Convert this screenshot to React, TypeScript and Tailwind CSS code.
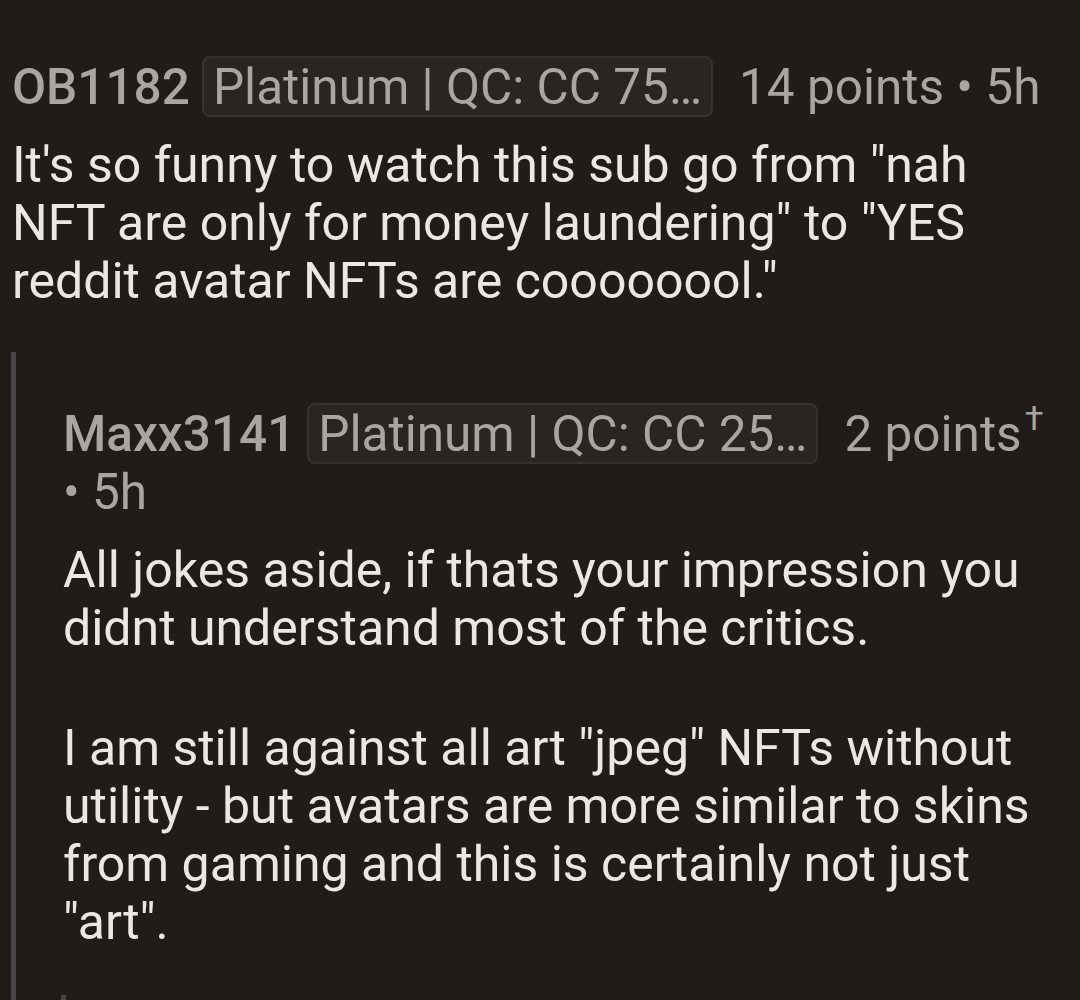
import React from "react";

function Badge({ text }: { text: string }) {
  return (
    <span className="inline-flex h-[61px] items-center rounded-[8px] border-2 border-[#363230] bg-[#292523] px-[9px] text-[#aaa4a3]">
      {text}
    </span>
  );
}

export default function App() {
  return (
    <div
      className="h-[1000px] w-[1080px] overflow-hidden bg-[#201c19]"
      style={{ fontFamily: "Roboto, 'Noto Sans', sans-serif" }}
    >
      <div className="pt-[56px]">
        <div className="px-[12px]">
          <div className="flex flex-wrap items-center gap-x-[12px] text-[49.5px] leading-[56px] text-[#aaa4a3]">
            <span className="font-medium">OB1182</span>
            <Badge text="Platinum | QC: CC 75…" />
            <span className="ml-[14px]">14 points • 5h</span>
          </div>
          <p className="mt-[19px] text-[50px] leading-[58px] text-[#ebe7e4]">
            It's so funny to watch this sub go from "nah
            <br />
            NFT are only for money laundering" to "YES
            <br />
            reddit avatar NFTs are coooooool."
          </p>
        </div>

        <div className="ml-[11px] mt-[42px] border-l-[5px] border-[#4a4645] pl-[47px] pt-[51px]">
          <div className="flex flex-wrap items-center gap-x-[12px] text-[49.5px] leading-[56px] text-[#aaa4a3]">
            <span className="font-medium">Maxx3141</span>
            <Badge text="Platinum | QC: CC 25…" />
            <span className="ml-[14px]">
              2 points<sup className="ml-[3px] top-[-0.6em] text-[34px]">†</sup>
            </span>
            <span>• 5h</span>
          </div>
          <p className="mt-[21px] text-[50px] leading-[58px] text-[#ebe7e4]">
            All jokes aside, if thats your impression you
            <br />
            didnt understand most of the critics.
          </p>
          <p className="mt-[62px] text-[50px] leading-[58px] text-[#ebe7e4]">
            I am still against all art "jpeg" NFTs without
            <br />
            utility - but avatars are more similar to skins
            <br />
            from gaming and this is certainly not just
            <br />
            "art".
          </p>
          <div className="ml-[-2px] mt-[44px] h-[40px] w-[5px] bg-[#4a4645]" />
        </div>
      </div>
    </div>
  );
}
